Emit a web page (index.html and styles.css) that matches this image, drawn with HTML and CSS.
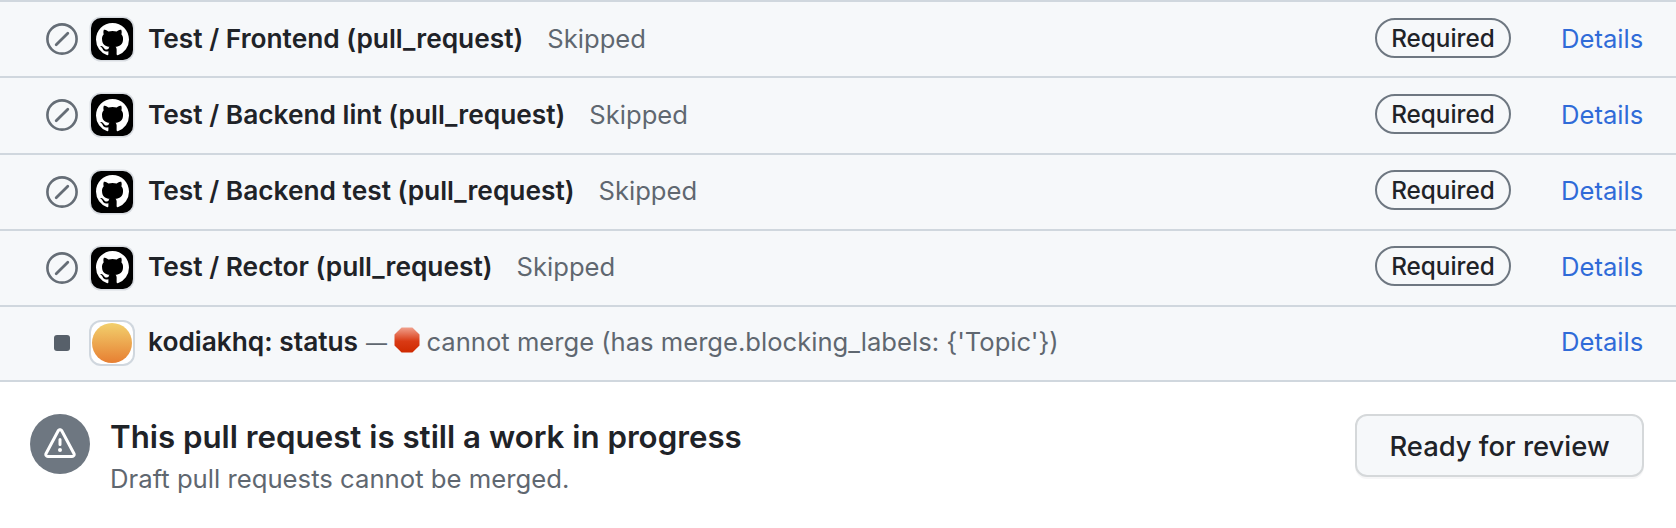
FILE: index.html
```html
<!DOCTYPE html>
<html lang="en">
<head>
<meta charset="utf-8">
<title>Checks</title>
<link rel="stylesheet" href="styles.css">
</head>
<body>
<svg class="defs" width="0" height="0" aria-hidden="true">
  <symbol id="skip" viewBox="0 0 32 32">
    <circle cx="16" cy="16" r="14.6" fill="none" stroke="#656d76" stroke-width="2.6"/>
    <path d="M10.2 21.8 21.8 10.2" fill="none" stroke="#656d76" stroke-width="2.8" stroke-linecap="round"/>
  </symbol>
  <symbol id="mark" viewBox="0 0 16 16">
    <path fill="#fff" d="M8 0c4.42 0 8 3.58 8 8a8.013 8.013 0 0 1-5.45 7.59c-.4.08-.55-.17-.55-.38 0-.27.01-1.13.01-2.2 0-.75-.25-1.23-.54-1.48 1.78-.2 3.65-.88 3.65-3.95 0-.88-.31-1.59-.82-2.15.08-.2.36-1.02-.08-2.12 0 0-.67-.22-2.2.82-.64-.18-1.32-.27-2-.27-.68 0-1.36.09-2 .27-1.53-1.03-2.2-.82-2.2-.82-.44 1.1-.16 1.92-.08 2.12-.51.56-.82 1.28-.82 2.15 0 3.06 1.86 3.75 3.64 3.95-.23.2-.44.55-.51 1.07-.46.21-1.61.55-2.33-.66-.15-.24-.6-.83-1.23-.82-.67.01-.27.38.01.53.34.19.73.9.82 1.13.16.45.68 1.31 2.69.94 0 .67.01 1.3.01 1.49 0 .21-.15.45-.55.38A7.995 7.995 0 0 1 0 8c0-4.42 3.58-8 8-8Z"/>
  </symbol>
  <linearGradient id="stopfill" x1="0" y1="0" x2="0" y2="1">
    <stop offset="0" stop-color="#f0a08c"/>
    <stop offset=".55" stop-color="#d93a14"/>
    <stop offset="1" stop-color="#cf2a00"/>
  </linearGradient>
</svg>

<main class="panel">
  <section class="checks">
    <div class="row">
      <span class="status"><svg class="skip"><use href="#skip"/></svg></span>
      <span class="avatar"><svg class="mark"><use href="#mark"/></svg></span>
      <span class="desc"><strong>Test / Frontend (pull_request)</strong><span class="note">Skipped</span></span>
      <span class="pill">Required</span>
      <a class="details" href="#">Details</a>
    </div>
    <div class="row">
      <span class="status"><svg class="skip"><use href="#skip"/></svg></span>
      <span class="avatar"><svg class="mark"><use href="#mark"/></svg></span>
      <span class="desc"><strong>Test / Backend lint (pull_request)</strong><span class="note">Skipped</span></span>
      <span class="pill">Required</span>
      <a class="details" href="#">Details</a>
    </div>
    <div class="row">
      <span class="status"><svg class="skip"><use href="#skip"/></svg></span>
      <span class="avatar"><svg class="mark"><use href="#mark"/></svg></span>
      <span class="desc"><strong>Test / Backend test (pull_request)</strong><span class="note">Skipped</span></span>
      <span class="pill">Required</span>
      <a class="details" href="#">Details</a>
    </div>
    <div class="row">
      <span class="status"><svg class="skip"><use href="#skip"/></svg></span>
      <span class="avatar"><svg class="mark"><use href="#mark"/></svg></span>
      <span class="desc"><strong>Test / Rector (pull_request)</strong><span class="note">Skipped</span></span>
      <span class="pill">Required</span>
      <a class="details" href="#">Details</a>
    </div>
    <div class="row row-last">
      <span class="status"><span class="square"></span></span>
      <span class="avatar avatar-app"><span class="sun"></span></span>
      <span class="desc"><strong>kodiakhq: status</strong><span class="message"><span class="dash">—</span> <svg class="stop" viewBox="0 0 26 26"><polygon points="7.6,0.5 18.4,0.5 25.5,7.6 25.5,18.4 18.4,25.5 7.6,25.5 0.5,18.4 0.5,7.6" fill="url(#stopfill)"/></svg> cannot merge (has merge.blocking_labels: {'Topic'})</span></span>
      <a class="details" href="#">Details</a>
    </div>
  </section>

  <section class="draft">
    <span class="alert-badge">
      <svg class="alert-icon" viewBox="0 0 16 16"><path fill="#fff" d="M6.457 1.047c.659-1.234 2.427-1.234 3.086 0l6.082 11.378A1.75 1.75 0 0 1 14.082 15H1.918a1.75 1.75 0 0 1-1.543-2.575Zm1.763.707a.25.25 0 0 0-.44 0L1.698 13.132a.25.25 0 0 0 .22.368h12.164a.25.25 0 0 0 .22-.368Zm.53 3.996v2.5a.75.75 0 0 1-1.5 0v-2.5a.75.75 0 0 1 1.5 0ZM9 11a1 1 0 1 1-2 0 1 1 0 0 1 2 0Z"/></svg>
    </span>
    <div class="draft-text">
      <h3>This pull request is still a work in progress</h3>
      <p>Draft pull requests cannot be merged.</p>
    </div>
    <button class="ready" type="button">Ready for review</button>
  </section>
</main>
</body>
</html>
```

FILE: styles.css
```css
* { box-sizing: border-box; }

html, body {
  margin: 0;
  padding: 0;
  background: #fff;
}

body {
  width: 1676px;
  height: 528px;
  overflow: hidden;
  font-family: Inter, "Liberation Sans", sans-serif;
  font-size: 25.6px;
  color: #1f2328;
}

.defs { position: absolute; }

.checks {
  background: #f6f8fa;
  border-top: 2px solid #d0d7de;
}

.row {
  display: flex;
  align-items: center;
  height: 76.25px;
  padding: 0 33px 0 46px;
  border-bottom: 2px solid #d0d7de;
}

.row-last { height: 74.5px; }

.status {
  display: flex;
  align-items: center;
  justify-content: center;
  width: 32px;
  height: 32px;
  flex: none;
}

.skip { width: 32px; height: 32px; }

.square {
  width: 16px;
  height: 16px;
  border-radius: 3px;
  background: #57606a;
}

.avatar {
  display: flex;
  align-items: center;
  justify-content: center;
  width: 42px;
  height: 42px;
  margin-left: 13px;
  flex: none;
  background: #000;
  border-radius: 10px;
  box-shadow: 0 0 0 1.5px #d8dce1;
}

.mark { width: 33px; height: 33px; }

.avatar-app {
  background: #fff;
  box-shadow: 0 0 0 2px #d0d7de;
}

.sun {
  width: 40px;
  height: 40px;
  border-radius: 50%;
  background: linear-gradient(#f2d06d, #e77f32);
}

.desc {
  flex: 1;
  margin-left: 15px;
  padding-bottom: 2px;
  white-space: nowrap;
}

.row-last .desc,
.row-last .details { padding-bottom: 3px; }

.desc strong {
  font-size: 26.3px;
  font-weight: 600;
}

.note {
  margin-left: 24px;
  color: #5f6770;
}

.message {
  margin-left: 8px;
  color: #5f6770;
}

.dash { font-size: 21px; }

.stop {
  width: 26px;
  height: 26px;
  vertical-align: -2px;
  margin: 0 -1px 0 0;
}

.pill {
  display: flex;
  align-items: center;
  justify-content: center;
  width: 136px;
  height: 40px;
  margin-right: 50px;
  margin-bottom: 3px;
  border: 2px solid #6e7781;
  border-radius: 20px;
  font-size: 24.3px;
  font-weight: 500;
}

.details {
  width: 82px;
  padding-bottom: 2px;
  text-align: right;
  font-size: 25.6px;
  color: #2f6bd8;
  text-decoration: none;
}

.draft {
  display: flex;
  align-items: flex-start;
  padding: 32.5px 32px 0 30px;
}

.alert-badge {
  display: flex;
  align-items: center;
  justify-content: center;
  width: 60px;
  height: 60px;
  flex: none;
  border-radius: 50%;
  background: #6e7781;
}

.alert-icon { width: 32px; height: 32px; }

.draft-text {
  flex: 1;
  margin-left: 20px;
  padding-top: 2.5px;
}

.draft-text h3 {
  margin: 0;
  font-size: 31.25px;
  line-height: 40px;
  font-weight: 600;
}

.draft-text p {
  margin: 6px 0 0;
  font-size: 25.7px;
  line-height: 32px;
  color: #5f6770;
}

.ready {
  width: 289px;
  height: 63px;
  padding: 0;
  background: #f6f8fa;
  border: 2px solid #d5d8da;
  border-radius: 12px;
  box-shadow: 0 2px 0 rgba(31, 35, 40, .04);
  font: 500 27.4px Inter, "Liberation Sans", sans-serif;
  color: #1f2328;
}
```
